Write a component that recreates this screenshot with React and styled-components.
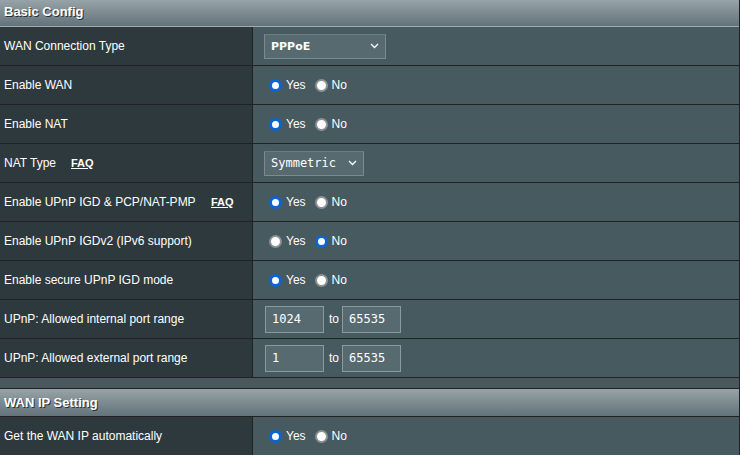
import React from 'react';
import styled, { createGlobalStyle } from 'styled-components';

const GlobalStyle = createGlobalStyle`
  html, body {
    margin: 0;
    padding: 0;
    background: #4a585d;
    font-family: "Liberation Sans", Arial, sans-serif;
  }
`;

const rows = [
  { label: 'WAN Connection Type', kind: 'select', value: 'PPPoE', width: 122, bold: true },
  { label: 'Enable WAN', kind: 'radio', value: 'yes' },
  { label: 'Enable NAT', kind: 'radio', value: 'yes' },
  { label: 'NAT Type', faq: 67, kind: 'select', value: 'Symmetric', width: 100, mono: true },
  { label: 'Enable UPnP IGD & PCP/NAT-PMP', faq: 207, kind: 'radio', value: 'yes' },
  { label: 'Enable UPnP IGDv2 (IPv6 support)', kind: 'radio', value: 'no' },
  { label: 'Enable secure UPnP IGD mode', kind: 'radio', value: 'yes' },
  { label: 'UPnP: Allowed internal port range', kind: 'range', from: '1024', to: '65535' },
  { label: 'UPnP: Allowed external port range', kind: 'range', from: '1', to: '65535' },
];

function Radio({ checked, children }) {
  return (
    <RadioLabel>
      <RadioDot checked={checked} />
      {children}
    </RadioLabel>
  );
}

function Value({ row }) {
  if (row.kind === 'select') {
    return (
      <Select width={row.width} bold={row.bold} mono={row.mono}>
        <span>{row.value}</span>
        <svg width="9" height="6" viewBox="0 0 9 6">
          <path d="M1 1 L4.5 4.5 L8 1" fill="none" stroke="#fff" strokeWidth="1.3" />
        </svg>
      </Select>
    );
  }
  if (row.kind === 'range') {
    return (
      <RangeBox>
        <PortInput>{row.from}</PortInput>
        <To>to</To>
        <PortInput>{row.to}</PortInput>
      </RangeBox>
    );
  }
  return (
    <RadioGroup>
      <Radio checked={row.value === 'yes'}>Yes</Radio>
      <Radio checked={row.value === 'no'}>No</Radio>
    </RadioGroup>
  );
}

function App() {
  return (
    <>
      <GlobalStyle />
      <Page>
        <SectionHeader height={27} pad={4} light>Basic Config</SectionHeader>
        <Table>
          {rows.map((row) => (
            <Row key={row.label}>
              <LabelCell>
                <LabelText width={row.faq}>{row.label}</LabelText>
                {row.faq && <Faq>FAQ</Faq>}
              </LabelCell>
              <ValueCell>
                <Value row={row} />
              </ValueCell>
            </Row>
          ))}
        </Table>
        <Spacer />
        <SectionHeader height={29} pad={0}>WAN IP Setting</SectionHeader>
        <Table>
          <Row>
            <LabelCell>
              <LabelText>Get the WAN IP automatically</LabelText>
            </LabelCell>
            <ValueCell>
              <RadioGroup>
                <Radio checked>Yes</Radio>
                <Radio>No</Radio>
              </RadioGroup>
            </ValueCell>
          </Row>
        </Table>
      </Page>
    </>
  );
}

const Page = styled.div`
  width: 739px;
  height: 455px;
  overflow: hidden;
  border-right: 1px solid #222;
  background: #4a585d;
`;

const SectionHeader = styled.div`
  height: ${(p) => p.height}px;
  box-sizing: border-box;
  padding: 0 0 ${(p) => p.pad}px 4px;
  display: flex;
  align-items: center;
  background: linear-gradient(to bottom, #97a3a8, #63737a);
  border-top: ${(p) => (p.light ? 'none' : '1px solid #222')};
  border-bottom: 1px solid ${(p) => (p.light ? '#a2aaad' : '#222')};
  color: #fff;
  font-weight: bold;
  font-size: 13px;
  text-shadow: 1px 1px 0 #2a3236;
`;

const Table = styled.div`
  display: flex;
  flex-direction: column;
`;

const Row = styled.div`
  display: grid;
  grid-template-columns: 253px 1fr;
  height: 39px;
  box-sizing: border-box;
  border-bottom: 1px solid #222;
`;

const LabelCell = styled.div`
  display: flex;
  align-items: center;
  padding-left: 4px;
  background: #2e393d;
  border-right: 1px solid #222;
  color: #fff;
  font-size: 12px;
`;

const LabelText = styled.span`
  width: ${(p) => (p.width ? `${p.width}px` : 'auto')};
  flex: none;
`;

const Faq = styled.span`
  font-weight: bold;
  font-size: 11px;
  text-decoration: underline;
`;

const ValueCell = styled.div`
  display: flex;
  align-items: center;
  padding-left: 11px;
  background: #475a60;
  color: #fff;
  font-size: 12px;
`;

const Select = styled.div`
  width: ${(p) => p.width}px;
  height: 25px;
  box-sizing: border-box;
  display: flex;
  align-items: center;
  justify-content: space-between;
  padding: 0 6px 0 6px;
  background: #576a70;
  border: 1px solid #7d898d;
  border-top-color: #6d7a7e;
  color: #fff;
  font-family: ${(p) => (p.mono ? '"DejaVu Sans Mono", monospace' : '"DejaVu Sans", sans-serif')};
  font-weight: ${(p) => (p.bold ? 'bold' : 'normal')};
  font-size: ${(p) => (p.mono ? '12px' : '11px')};
`;

const RadioGroup = styled.div`
  display: flex;
  align-items: center;
  gap: 9px;
  margin-left: 5px;
`;

const RadioLabel = styled.label`
  display: flex;
  align-items: center;
  gap: 4px;
  font-size: 12px;
  color: #fff;
`;

const RadioDot = styled.span`
  width: 13px;
  height: 13px;
  box-sizing: border-box;
  border-radius: 50%;
  background: #fff;
  border: ${(p) => (p.checked ? '3px solid #0a64d8' : '2px solid #8d9194')};
`;

const RangeBox = styled.div`
  display: flex;
  align-items: center;
  margin-left: 1px;
`;

const PortInput = styled.div`
  width: 59px;
  height: 27px;
  box-sizing: border-box;
  display: flex;
  align-items: center;
  padding-left: 6px;
  background: #576a70;
  border: 1px solid #8c999d;
  color: #fff;
  font-family: "DejaVu Sans Mono", monospace;
  font-size: 12px;
`;

const To = styled.span`
  font-size: 12px;
  margin: 0 3px 0 5px;
`;

const Spacer = styled.div`
  height: 10px;
  background: #4a585d;
`;

export default App;
